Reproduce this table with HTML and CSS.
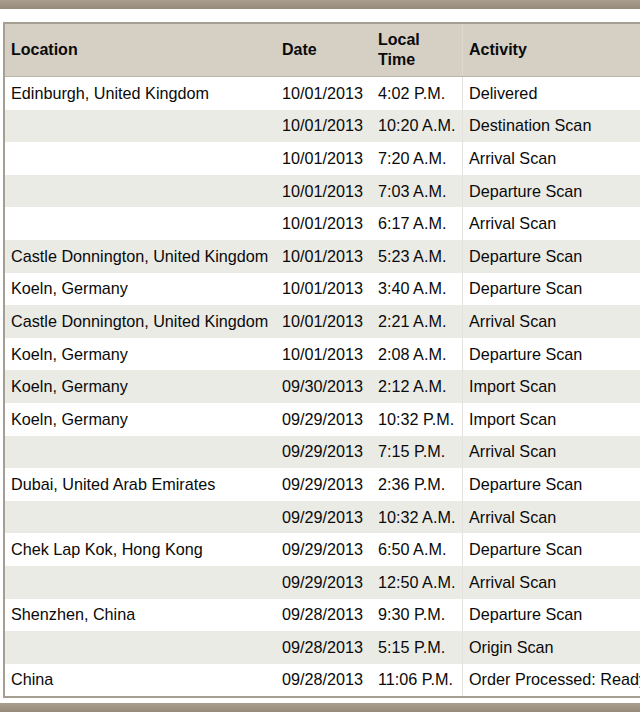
FILE: index.html
```html
<!DOCTYPE html>
<html>
<head>
<meta charset="utf-8">
<link rel="stylesheet" href="styles.css">
</head>
<body>
<div class="bar"></div>
<div class="frame">
<table class="track">
<thead>
<tr><th class="c-loc">Location</th><th class="c-date">Date</th><th class="c-time">Local<br>Time</th><th class="c-act">Activity</th></tr>
</thead>
<tbody>
<tr><td>Edinburgh, United Kingdom</td><td>10/01/2013</td><td>4:02 P.M.</td><td>Delivered</td></tr>
<tr><td></td><td>10/01/2013</td><td>10:20 A.M.</td><td>Destination Scan</td></tr>
<tr><td></td><td>10/01/2013</td><td>7:20 A.M.</td><td>Arrival Scan</td></tr>
<tr><td></td><td>10/01/2013</td><td>7:03 A.M.</td><td>Departure Scan</td></tr>
<tr><td></td><td>10/01/2013</td><td>6:17 A.M.</td><td>Arrival Scan</td></tr>
<tr><td>Castle Donnington, United Kingdom</td><td>10/01/2013</td><td>5:23 A.M.</td><td>Departure Scan</td></tr>
<tr><td>Koeln, Germany</td><td>10/01/2013</td><td>3:40 A.M.</td><td>Departure Scan</td></tr>
<tr><td>Castle Donnington, United Kingdom</td><td>10/01/2013</td><td>2:21 A.M.</td><td>Arrival Scan</td></tr>
<tr><td>Koeln, Germany</td><td>10/01/2013</td><td>2:08 A.M.</td><td>Departure Scan</td></tr>
<tr><td>Koeln, Germany</td><td>09/30/2013</td><td>2:12 A.M.</td><td>Import Scan</td></tr>
<tr><td>Koeln, Germany</td><td>09/29/2013</td><td>10:32 P.M.</td><td>Import Scan</td></tr>
<tr><td></td><td>09/29/2013</td><td>7:15 P.M.</td><td>Arrival Scan</td></tr>
<tr><td>Dubai, United Arab Emirates</td><td>09/29/2013</td><td>2:36 P.M.</td><td>Departure Scan</td></tr>
<tr><td></td><td>09/29/2013</td><td>10:32 A.M.</td><td>Arrival Scan</td></tr>
<tr><td>Chek Lap Kok, Hong Kong</td><td>09/29/2013</td><td>6:50 A.M.</td><td>Departure Scan</td></tr>
<tr><td></td><td>09/29/2013</td><td>12:50 A.M.</td><td>Arrival Scan</td></tr>
<tr><td>Shenzhen, China</td><td>09/28/2013</td><td>9:30 P.M.</td><td>Departure Scan</td></tr>
<tr><td></td><td>09/28/2013</td><td>5:15 P.M.</td><td>Origin Scan</td></tr>
<tr><td>China</td><td>09/28/2013</td><td>11:06 P.M.</td><td>Order Processed: Ready for UPS</td></tr>
</tbody>
</table>
</div>
<div class="bar bar-bottom"></div>
</body>
</html>
```
FILE: styles.css
```css
html, body {
  margin: 0;
  padding: 0;
  background: #ffffff;
  overflow: hidden;
  width: 640px;
}
body {
  font-family: "Liberation Sans", Arial, Helvetica, sans-serif;
  color: #0a0a0a;
}
.bar {
  height: 9px;
  background: linear-gradient(#a89e8f, #968b7b);
}
.frame {
  margin: 13px 0 0 3px;
  width: 760px;
  border-top: 2px solid #a49e93;
  border-left: 2px solid #a49e93;
  border-bottom: 2px solid #a49e93;
}
.bar-bottom {
  margin-top: 5px;
}
.track {
  border-collapse: collapse;
  table-layout: fixed;
  width: 758px;
  font-size: 16.2px;
}
.track th, .track td {
  padding: 0 0 0 6px;
  text-align: left;
  white-space: nowrap;
  overflow: hidden;
  vertical-align: middle;
}
.track th {
  background: #d5cfc4;
  font-weight: bold;
  font-size: 16px;
  height: 52px;
  line-height: 20px;
  border-bottom: 1px solid #bdb6aa;
}
.track td {
  height: 32.6px;
}
.c-loc { width: 265px; }
.c-date { width: 90px; }
.c-time { width: 84px; }
.track th.c-act, .track td:nth-child(4) {
  border-left: 1px solid #e6e3de;
}
.track th.c-act {
  border-left-color: #ddd8cf;
}
.track tbody tr:nth-child(even) td {
  background: #ebebe6;
}
.track tbody tr:nth-child(odd) td {
  background: #ffffff;
}
```
